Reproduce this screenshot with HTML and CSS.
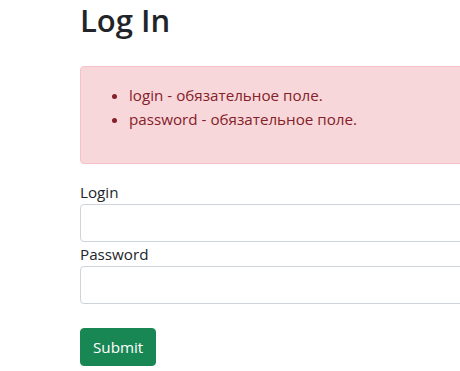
FILE: index.html
```html
<!DOCTYPE html>
<html lang="ru">
<head>
<meta charset="UTF-8" />
<meta name="viewport" content="width=device-width, initial-scale=1.0" />
<title>Log In</title>
<link rel="stylesheet" href="styles.css">
</head>
<body>
<div class="page">
    <h1 class="title">Log In</h1>
    <div class="alert">
        <ul>
            <li>login - обязательное поле.</li>
            <li>password - обязательное поле.</li>
        </ul>
    </div>
    <form class="login-form">
        <div class="field">
            <label for="login">Login</label>
            <input type="text" id="login" name="login">
        </div>
        <div class="field">
            <label for="password">Password</label>
            <input type="password" id="password" name="password">
        </div>
        <button type="submit">Submit</button>
    </form>
</div>
</body>
</html>
```

FILE: styles.css
```css
html, body { overflow: hidden; }
body { margin: 0; font-family: "Open Sans", "Noto Sans", sans-serif; font-size: 15.2px; line-height: 24px; color: #212529; background: #fff; }
.page { width: 640px; padding-left: 80px; }
.title { margin: 0 0 27px; padding-top: 1px; font-size: 31px; font-weight: 600; line-height: 38px; }
.alert { padding: 16px; margin-bottom: 16px; background: #f8d7da; border: 1px solid #f5c2c7; border-radius: 4px; color: #842029; }
.alert ul { margin: 0 0 16px; padding-left: 32px; }
.field label { display: block; }
.field input { display: block; box-sizing: border-box; width: 100%; height: 38px; padding: 6px 12px; font: inherit; border: 1px solid #ced4da; border-radius: 4px; background: #fff; }
button { margin-top: 24px; height: 38px; padding: 6px 12px; font: inherit; color: #fff; background: #198754; border: 1px solid #198754; border-radius: 4px; cursor: pointer; }
```
